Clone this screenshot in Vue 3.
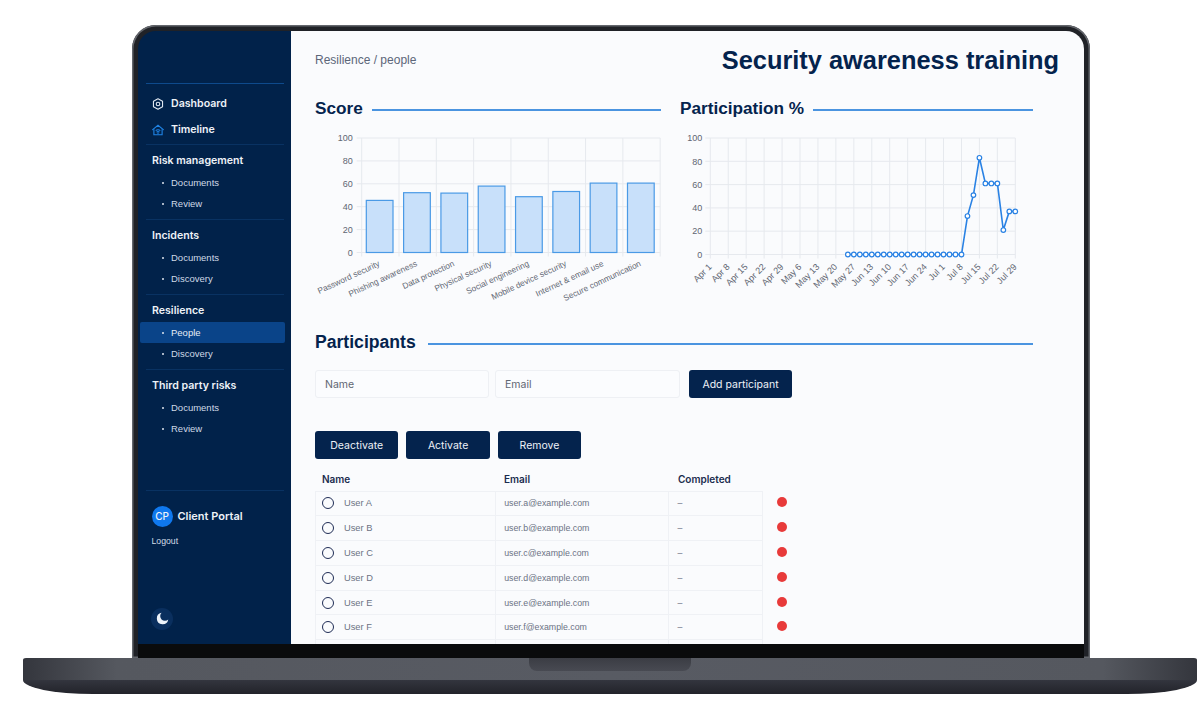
<script setup>
const navGroups = [
  { title: 'Risk management', items: ['Documents', 'Review'] },
  { title: 'Incidents', items: ['Documents', 'Discovery'] },
  { title: 'Resilience', items: ['People', 'Discovery'], active: 'People' },
  { title: 'Third party risks', items: ['Documents', 'Review'] }
]

const ticks = [100, 80, 60, 40, 20, 0]

// score chart
const bx = 46.7, bw = 298.5, by = 10, bh = 114.5
const scores = [
  { label: 'Password security', top: 200.7 },
  { label: 'Phishing awareness', top: 193 },
  { label: 'Data protection', top: 193.4 },
  { label: 'Physical security', top: 186.4 },
  { label: 'Social engineering', top: 197 },
  { label: 'Mobile device security', top: 191.8 },
  { label: 'Internet & email use', top: 183.4 },
  { label: 'Secure communication', top: 183.4 }
]
const step = bw / scores.length
const bars = scores.map((s, i) => ({
  label: s.label,
  x: bx + i * step + 4.6,
  y: s.top - 128.3,
  h: 252.8 - s.top,
  cx: bx + (i + 0.5) * step
}))

// participation chart
const lx = 30.3, lw = 305, ly = 10, lh = 116.5
const dates = ['Apr 1', 'Apr 8', 'Apr 15', 'Apr 22', 'Apr 29', 'May 6', 'May 13', 'May 20', 'May 27', 'Jun 13', 'Jun 10', 'Jun 17', 'Jun 24', 'Jul 1', 'Jul 8', 'Jul 15', 'Jul 22', 'Jul 29']
const pstep = lw / 17
const values = [...Array(20).fill(0), 33, 51, 83, 61, 61, 61, 21, 37, 37]
const points = values.map((v, i) => ({
  x: lx + ((i + 23) * pstep) / 3,
  y: ly + lh - (v / 100) * lh
}))
const linePath = points.map(p => `${p.x.toFixed(1)},${p.y.toFixed(1)}`).join(' ')

const users = ['A', 'B', 'C', 'D', 'E', 'F', '']
</script>

<template>
  <div class="page">
    <div class="lid">
      <div class="screen">
        <aside class="sidebar">
          <div class="side-top">
            <a class="nav-main">
              <svg class="nav-icon" viewBox="0 0 14 14" fill="none" stroke="#dfe6ef" stroke-width="1.3">
                <path d="M7 .9 12.3 3.8v6.4L7 13.1 1.7 10.2V3.8z" stroke-linejoin="round" />
                <circle cx="7" cy="7" r="2.1" />
              </svg>
              Dashboard
            </a>
            <a class="nav-main">
              <svg class="nav-icon" viewBox="0 0 14 14" fill="none" stroke="#1f84e6" stroke-width="1.3">
                <path d="M.8 6.6 7 1.4l6.2 5.2" stroke-linecap="round" />
                <path d="M2.2 6v6.6h9.6V6" />
                <path d="M4.3 7.8a3.8 3.8 0 0 1 5.4 0M5.4 9.6a2.3 2.3 0 0 1 3.2 0" />
                <circle cx="7" cy="11.2" r=".8" fill="#1f84e6" stroke="none" />
              </svg>
              Timeline
            </a>
          </div>
          <div v-for="group in navGroups" :key="group.title" class="nav-group">
            <h4>{{ group.title }}</h4>
            <a
              v-for="item in group.items"
              :key="item"
              class="nav-sub"
              :class="{ active: group.active === item }"
            >{{ item }}</a>
          </div>
          <div class="account">
            <div class="account-name">
              <span class="avatar">CP</span>
              Client Portal
            </div>
            <div class="logout">Logout</div>
          </div>
          <div class="theme">
            <svg viewBox="0 0 14 14" width="13" height="13">
              <path d="M6 .8A6.2 6.2 0 1 0 13.2 8 4.8 4.8 0 0 1 6 .8z" fill="#eef3fa" />
            </svg>
          </div>
        </aside>

        <main class="main">
          <header class="top">
            <span class="crumb">Resilience / people</span>
            <h1>Security awareness training</h1>
          </header>

          <div class="charts">
            <section class="chart-score">
              <h2 class="heading"><span>Score</span></h2>
              <svg class="chart" width="365" height="180" viewBox="0 0 365 180">
                <g stroke="#e6e9ee" stroke-width="1">
                  <line v-for="(t, i) in ticks" :key="t" :x1="bx - 5" :x2="bx + bw" :y1="by + i * bh / 5" :y2="by + i * bh / 5" />
                  <line v-for="i in 9" :key="i" :x1="bx + (i - 1) * step" :x2="bx + (i - 1) * step" :y1="by" :y2="by + bh + 4" />
                </g>
                <text v-for="(t, i) in ticks" :key="t" class="tick" :x="bx - 9" :y="by + i * bh / 5 + 3.2" text-anchor="end">{{ t }}</text>
                <rect
                  v-for="b in bars"
                  :key="b.label"
                  :x="b.x"
                  :y="b.y"
                  :width="step - 10.6"
                  :height="b.h"
                  fill="#c8e0fa"
                  stroke="#4a9ae6"
                  stroke-width="1.2"
                />
                <text
                  v-for="b in bars"
                  :key="b.label"
                  class="tick-small"
                  :x="b.cx"
                  :y="by + bh + 13"
                  text-anchor="end"
                  :transform="`rotate(-25 ${b.cx} ${by + bh + 13})`"
                >{{ b.label }}</text>
              </svg>
            </section>
            <section class="chart-part">
              <h2 class="heading"><span>Participation %</span></h2>
              <svg class="chart" width="353" height="180" viewBox="0 0 353 180">
                <g stroke="#e6e9ee" stroke-width="1">
                  <line v-for="(t, i) in ticks" :key="t" :x1="lx - 5" :x2="lx + lw" :y1="ly + i * lh / 5" :y2="ly + i * lh / 5" />
                  <line v-for="(d, i) in dates" :key="d + i" :x1="lx + i * pstep" :x2="lx + i * pstep" :y1="ly" :y2="ly + lh + 4" />
                </g>
                <text v-for="(t, i) in ticks" :key="t" class="tick" :x="lx - 8" :y="ly + i * lh / 5 + 3.2" text-anchor="end">{{ t }}</text>
                <polyline :points="linePath" fill="none" stroke="#2a82e4" stroke-width="1.6" />
                <circle v-for="(p, i) in points" :key="i" :cx="p.x" :cy="p.y" r="2.3" fill="#fff" stroke="#2a82e4" stroke-width="1.2" />
                <text
                  v-for="(d, i) in dates"
                  :key="d + i"
                  class="tick-date"
                  :x="lx + i * pstep + 2"
                  :y="ly + lh + 13"
                  text-anchor="end"
                  :transform="`rotate(-45 ${lx + i * pstep + 2} ${ly + lh + 13})`"
                >{{ d }}</text>
              </svg>
            </section>
          </div>

          <h2 class="heading participants"><span>Participants</span></h2>

          <form class="add-form" @submit.prevent>
            <input class="name-input" type="text" placeholder="Name" />
            <input class="email-input" type="text" placeholder="Email" />
            <button class="btn add-btn">Add participant</button>
          </form>

          <div class="actions">
            <button class="btn">Deactivate</button>
            <button class="btn">Activate</button>
            <button class="btn">Remove</button>
          </div>

          <div class="table-head">
            <span class="col-name">Name</span>
            <span class="col-email">Email</span>
            <span class="col-done">Completed</span>
          </div>
          <div v-for="u in users" :key="u" class="row">
            <div class="cells">
              <div class="col-name cell-name">
                <template v-if="u">
                  <span class="radio"></span>
                  User {{ u }}
                </template>
              </div>
              <div class="col-email">{{ u ? `user.${u.toLowerCase()}@example.com` : '' }}</div>
              <div class="col-done">{{ u ? '–' : '' }}</div>
            </div>
            <span v-if="u" class="dot"></span>
          </div>
        </main>
      </div>
      <div class="chin"></div>
    </div>
    <div class="base">
      <div class="notch"></div>
    </div>
  </div>
</template>

<style>
body {
  background: #fff;
}
</style>

<style scoped>
* {
  box-sizing: border-box;
  margin: 0;
  padding: 0;
}

.page {
  width: 1200px;
  height: 720px;
  padding-top: 25px;
  overflow: hidden;
  font-family: Inter, "Liberation Sans", sans-serif;
}

/* LAPTOP */
.lid {
  width: 958px;
  height: 633px;
  margin-left: 132px;
  padding: 6px 6px 0;
  background: #202227;
  border-radius: 24px 24px 0 0;
  box-shadow: inset 0 0 0 1.5px #63666c;
}

.screen {
  display: flex;
  height: 613px;
  border-radius: 18px 18px 0 0;
  overflow: hidden;
}

.chin {
  height: 14px;
  background: #0a0b0c;
}

.base {
  display: flex;
  justify-content: center;
  width: 1174px;
  height: 36px;
  margin-left: 23px;
  border-radius: 3px 3px 70px 70px / 2px 2px 14px 14px;
  background:
    linear-gradient(#0000 0 22px, #33353e 22px, #22232a 100%),
    linear-gradient(90deg, #34363d 0, #55585f 8%, #585b63 50%, #55585f 92%, #34363d 100%);
}

.notch {
  width: 162px;
  height: 13px;
  border-radius: 0 0 8px 8px;
  background: linear-gradient(#3b3d44, #484a52);
}

/* SIDEBAR */
.sidebar {
  width: 153px;
  flex-shrink: 0;
  padding: 52px 6px 0;
  background: #01224a;
  color: #fff;
}

.side-top {
  margin: 0 1px 0 2px;
  padding: 6.5px 0 1px;
  border-top: 1px solid #0e4a8c;
}

.nav-main {
  display: flex;
  align-items: center;
  gap: 7px;
  height: 26px;
  padding-left: 6px;
  font-size: 10.6px;
  font-weight: 600;
  color: #eef2f8;
}

.nav-icon {
  width: 12px;
  height: 12px;
}

.nav-group {
  margin: 0 1px 0 2px;
  padding: 7px 0 5px;
  border-top: 1px solid #093262;
}

.nav-group h4 {
  height: 18px;
  padding-left: 6px;
  margin-bottom: 2px;
  font-size: 10.6px;
  font-weight: 600;
  line-height: 18px;
  color: #eef2f8;
}

.nav-sub {
  display: block;
  position: relative;
  height: 21px;
  padding-left: 25px;
  font-family: "Liberation Sans", sans-serif;
  font-size: 9.5px;
  line-height: 21px;
  color: #cfd9e6;
}

.nav-sub::before {
  content: "";
  position: absolute;
  left: 16px;
  top: 10px;
  width: 2px;
  height: 2px;
  border-radius: 50%;
  background: #dfe6ef;
}

.nav-sub.active {
  margin: 0 -1px 0 -6px;
  padding-left: 31px;
  background: #0a4489;
  border-radius: 2px;
  color: #e6edf6;
}

.nav-sub.active::before {
  left: 22px;
}

.account {
  margin: 46px 1px 0 2px;
  padding: 15px 5.5px 0;
  border-top: 1px solid #093262;
}

.account-name {
  display: flex;
  align-items: center;
  gap: 5px;
  font-size: 11px;
  font-weight: 600;
  color: #eef2f8;
}

.avatar {
  display: flex;
  align-items: center;
  justify-content: center;
  width: 21px;
  height: 21px;
  border-radius: 50%;
  background: #0f78ee;
  font-size: 10px;
  font-weight: 500;
}

.logout {
  margin-top: 9px;
  font-family: "Liberation Sans", sans-serif;
  font-size: 8.7px;
  color: #d3dce8;
}

.theme {
  display: flex;
  align-items: center;
  justify-content: center;
  width: 22px;
  height: 22px;
  margin: 62px 0 0 7px;
  border-radius: 50%;
  background: #0a2f5e;
}

/* MAIN */
.main {
  flex: 1;
  overflow: hidden;
  padding: 0 25px 0 24px;
  background: #fafbfd;
}

.top {
  display: flex;
  justify-content: space-between;
  align-items: center;
  height: 58px;
  margin-bottom: 8px;
}

.crumb {
  font-family: "Liberation Sans", sans-serif;
  font-size: 12px;
  color: #5c6679;
}

.top h1 {
  font-family: "Liberation Sans", sans-serif;
  font-size: 25.4px;
  font-weight: 700;
  color: #04234d;
}

.charts {
  display: flex;
}

.chart-score {
  width: 365px;
}

.chart-part {
  width: 353px;
}

.heading {
  display: flex;
  align-items: center;
  gap: 9px;
  height: 22px;
  font-family: "Liberation Sans", sans-serif;
  font-size: 17.2px;
  font-weight: 700;
  color: #04234d;
}

.heading::after {
  content: "";
  flex: 1;
  height: 2px;
  margin-top: 4px;
  background: #4a94e0;
}

.chart-score .heading {
  width: 346px;
}

.chart {
  display: block;
  margin-top: 9px;
  overflow: visible;
}

.tick {
  font-family: "Liberation Sans", sans-serif;
  font-size: 9px;
  fill: #5f6672;
}

.tick-small {
  font-family: "Liberation Sans", sans-serif;
  font-size: 8.3px;
  fill: #5f6672;
}

.tick-date {
  font-family: "Liberation Sans", sans-serif;
  font-size: 9px;
  fill: #5f6672;
}

.participants {
  width: 718px;
  height: 24px;
  margin-top: 22px;
  gap: 12px;
  font-size: 17.6px;
}

.add-form {
  display: flex;
  align-items: center;
  margin-top: 16px;
}

.add-form input {
  height: 28px;
  padding-left: 9px;
  border: 1px solid #eef0f4;
  border-radius: 3px;
  background: #fbfcfe;
  font-family: inherit;
  font-size: 10.5px;
}

.add-form input::placeholder {
  color: #5f6672;
}

.name-input {
  width: 174px;
  margin-right: 6px;
}

.email-input {
  width: 185px;
  margin-right: 9px;
}

.btn {
  width: 83.4px;
  height: 28px;
  border: none;
  border-radius: 3px;
  background: #04234d;
  color: #eef2f8;
  font-family: inherit;
  font-size: 10.5px;
}

.add-btn {
  width: 103px;
}

.actions {
  display: flex;
  gap: 8px;
  margin-top: 33px;
}

.table-head {
  display: flex;
  align-items: flex-end;
  height: 31.5px;
  padding-bottom: 6px;
  font-size: 10px;
  font-weight: 600;
  color: #1a2c4e;
}

.col-name {
  width: 181px;
  padding-left: 7px;
}

.col-email {
  width: 174px;
  padding-left: 8px;
}

.col-done {
  width: 93px;
  padding-left: 8px;
}

.row {
  display: flex;
  align-items: center;
  height: 24.8px;
}

.cells {
  display: flex;
  align-items: center;
  width: 448px;
  height: 100%;
  border: 1px solid #eff1f5;
  border-width: 1px 1px 0;
  font-family: "Liberation Sans", sans-serif;
  font-size: 8.8px;
  color: #6b7284;
}

.cells > div {
  display: flex;
  align-items: center;
  height: 100%;
  border-right: 1px solid #eff1f5;
}

.cells > div:last-child {
  border-right: none;
}

.cell-name {
  gap: 10px;
  padding-left: 6px;
  font-size: 9.3px;
}

.radio {
  width: 12px;
  height: 12px;
  border: 1.4px solid #1f2c55;
  border-radius: 50%;
}

.dot {
  width: 10px;
  height: 10px;
  margin: -1px 0 0 14px;
  border-radius: 50%;
  background: #e83a3a;
}
</style>
